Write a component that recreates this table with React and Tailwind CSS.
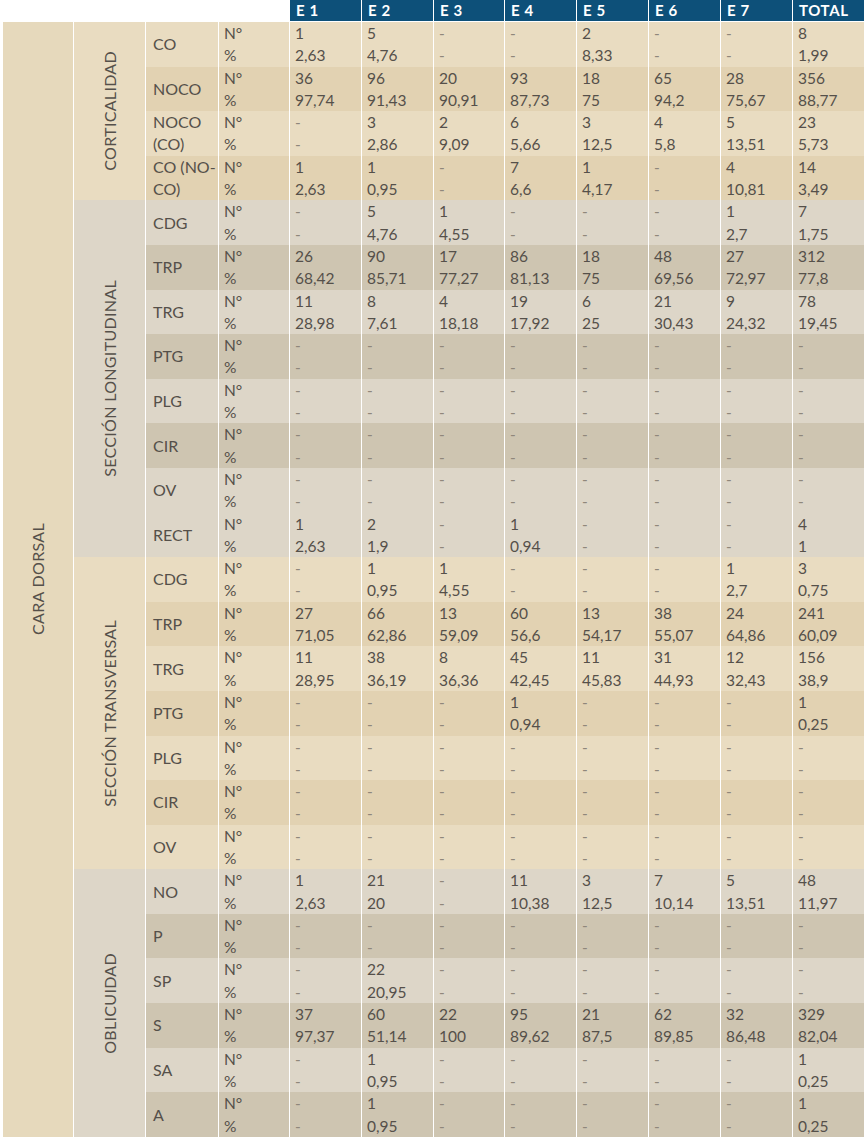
import React from "react";

const B_L = "bg-[#e9dcc1]";
const B_D = "bg-[#e2d2b2]";
const G_L = "bg-[#ddd6c8]";
const G_D = "bg-[#cec5b1]";

const D = ["-", "-", "-", "-", "-", "-", "-", "-"];

const sections = [
  {
    name: "CORTICALIDAD",
    tone: "b",
    rows: [
      { l: "CO", d: 0, n: ["1", "5", "-", "-", "2", "-", "-", "8"], p: ["2,63", "4,76", "-", "-", "8,33", "-", "-", "1,99"] },
      { l: "NOCO", d: 1, n: ["36", "96", "20", "93", "18", "65", "28", "356"], p: ["97,74", "91,43", "90,91", "87,73", "75", "94,2", "75,67", "88,77"] },
      { l: "NOCO (CO)", d: 0, n: ["-", "3", "2", "6", "3", "4", "5", "23"], p: ["-", "2,86", "9,09", "5,66", "12,5", "5,8", "13,51", "5,73"] },
      { l: "CO (NO-CO)", d: 1, n: ["1", "1", "-", "7", "1", "-", "4", "14"], p: ["2,63", "0,95", "-", "6,6", "4,17", "-", "10,81", "3,49"] },
    ],
  },
  {
    name: "SECCIÓN LONGITUDINAL",
    tone: "g",
    rows: [
      { l: "CDG", d: 0, n: ["-", "5", "1", "-", "-", "-", "1", "7"], p: ["-", "4,76", "4,55", "-", "-", "-", "2,7", "1,75"] },
      { l: "TRP", d: 1, n: ["26", "90", "17", "86", "18", "48", "27", "312"], p: ["68,42", "85,71", "77,27", "81,13", "75", "69,56", "72,97", "77,8"] },
      { l: "TRG", d: 0, n: ["11", "8", "4", "19", "6", "21", "9", "78"], p: ["28,98", "7,61", "18,18", "17,92", "25", "30,43", "24,32", "19,45"] },
      { l: "PTG", d: 1, n: D, p: D },
      { l: "PLG", d: 0, n: D, p: D },
      { l: "CIR", d: 1, n: D, p: D },
      { l: "OV", d: 0, n: D, p: D },
      { l: "RECT", d: 0, n: ["1", "2", "-", "1", "-", "-", "-", "4"], p: ["2,63", "1,9", "-", "0,94", "-", "-", "-", "1"] },
    ],
  },
  {
    name: "SECCIÓN TRANSVERSAL",
    tone: "b",
    rows: [
      { l: "CDG", d: 0, n: ["-", "1", "1", "-", "-", "-", "1", "3"], p: ["-", "0,95", "4,55", "-", "-", "-", "2,7", "0,75"] },
      { l: "TRP", d: 1, n: ["27", "66", "13", "60", "13", "38", "24", "241"], p: ["71,05", "62,86", "59,09", "56,6", "54,17", "55,07", "64,86", "60,09"] },
      { l: "TRG", d: 0, n: ["11", "38", "8", "45", "11", "31", "12", "156"], p: ["28,95", "36,19", "36,36", "42,45", "45,83", "44,93", "32,43", "38,9"] },
      { l: "PTG", d: 1, n: ["-", "-", "-", "1", "-", "-", "-", "1"], p: ["-", "-", "-", "0,94", "-", "-", "-", "0,25"] },
      { l: "PLG", d: 0, n: D, p: D },
      { l: "CIR", d: 1, n: D, p: D },
      { l: "OV", d: 0, n: D, p: D },
    ],
  },
  {
    name: "OBLICUIDAD",
    tone: "g",
    rows: [
      { l: "NO", d: 0, n: ["1", "21", "-", "11", "3", "7", "5", "48"], p: ["2,63", "20", "-", "10,38", "12,5", "10,14", "13,51", "11,97"] },
      { l: "P", d: 1, n: D, p: D },
      { l: "SP", d: 0, n: ["-", "22", "-", "-", "-", "-", "-", "-"], p: ["-", "20,95", "-", "-", "-", "-", "-", "-"] },
      { l: "S", d: 1, n: ["37", "60", "22", "95", "21", "62", "32", "329"], p: ["97,37", "51,14", "100", "89,62", "87,5", "89,85", "86,48", "82,04"] },
      { l: "SA", d: 0, n: ["-", "1", "-", "-", "-", "-", "-", "1"], p: ["-", "0,95", "-", "-", "-", "-", "-", "0,25"] },
      { l: "A", d: 1, n: ["-", "1", "-", "-", "-", "-", "-", "1"], p: ["-", "0,95", "-", "-", "-", "-", "-", "0,25"] },
    ],
  },
];

const headers = ["E 1", "E 2", "E 3", "E 4", "E 5", "E 6", "E 7", "TOTAL"];

const COLS = "grid-cols-[70px_71px_72px_70px_71px_71px_70px_71px_71px_71px_71px_71px]";

function Val({ v }) {
  if (v === "-") return <div className="h-[22.3px] leading-[22.3px] text-[#8f877b]">-</div>;
  return <div className="h-[22.3px] leading-[22.3px]">{v}</div>;
}

export default function App() {
  const cells = [];
  let rowIndex = 1;
  cells.push(
    <div
      key="cara"
      className="bg-[#e6d9bc] flex items-center justify-center"
      style={{ gridColumn: "1", gridRow: `1 / span 25` }}
    >
      <span className="[writing-mode:vertical-rl] rotate-180 text-[16px] tracking-[0.02em]">CARA DORSAL</span>
    </div>
  );
  sections.forEach((s, si) => {
    const base = s.tone === "b" ? B_L : G_L;
    cells.push(
      <div
        key={"sec" + si}
        className={`${base} flex items-center justify-center`}
        style={{ gridColumn: "2", gridRow: `${rowIndex} / span ${s.rows.length}` }}
      >
        <span className="[writing-mode:vertical-rl] rotate-180 text-[16px] tracking-[0.02em]">{s.name}</span>
      </div>
    );
    s.rows.forEach((r, ri) => {
      const bg = s.tone === "b" ? (r.d ? B_D : B_L) : r.d ? G_D : G_L;
      const gr = rowIndex + ri;
      cells.push(
        <div key={`l${si}-${ri}`} className={`${bg} flex items-center pl-[7px] text-[16px] leading-[22px]`} style={{ gridColumn: "3", gridRow: `${gr}` }}>
          <span>{r.l}</span>
        </div>
      );
      cells.push(
        <div key={`u${si}-${ri}`} className={`${bg} pl-[5px] text-[15.5px]`} style={{ gridColumn: "4", gridRow: `${gr}` }}>
          <div className="h-[22.3px] leading-[22.3px]">N°</div>
          <div className="h-[22.3px] leading-[22.3px]">%</div>
        </div>
      );
      for (let c = 0; c < 8; c++) {
        cells.push(
          <div key={`d${si}-${ri}-${c}`} className={`${bg} pl-[5px] text-[15.5px]`} style={{ gridColumn: `${5 + c}`, gridRow: `${gr}` }}>
            <Val v={r.n[c]} />
            <Val v={r.p[c]} />
          </div>
        );
      }
    });
    rowIndex += s.rows.length;
  });

  return (
    <div className="w-[868px] h-[1137px] bg-white overflow-hidden text-[#55504a]" style={{ fontFamily: "Lato, 'Noto Sans', sans-serif" }}>
      <div className="ml-[3px] w-[861px]">
        <div className={`grid ${COLS} gap-x-px h-[21px]`}>
          <div />
          <div />
          <div />
          <div />
          {headers.map((h) => (
            <div key={h} className="bg-[#0d5079] text-white font-bold text-[15px] tracking-[0.04em] leading-[21px] pl-[6px]">
              {h}
            </div>
          ))}
        </div>
        <div className={`grid ${COLS} grid-rows-[repeat(25,44.6px)] gap-x-px mt-px`}>{cells}</div>
      </div>
    </div>
  );
}
